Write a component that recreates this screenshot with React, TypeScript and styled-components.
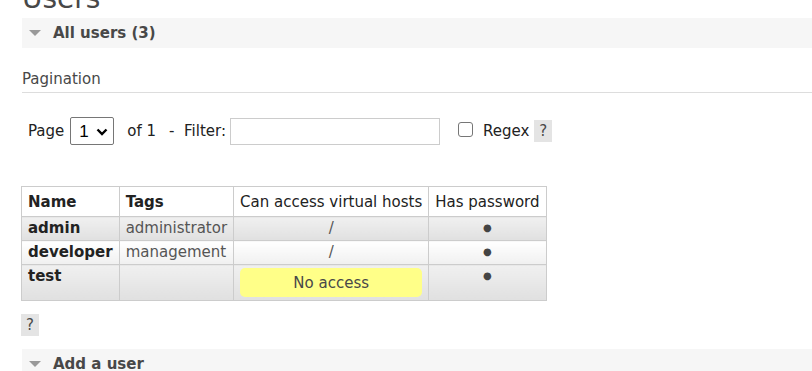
import React from "react";
import styled, {createGlobalStyle} from "styled-components";

const GLOBAL = createGlobalStyle`
    html, body {
        margin: 0;
        padding: 0;
        background: #fff;
        overflow: hidden;
    }
    body {
        font-family: "DejaVu Sans", Verdana, sans-serif;
        font-size: 13px;
        color: #484848;
    }
`

const MAIN = styled.main`
    padding-left: 21px;
    width: 791px;
`
const TITLE = styled.h1`
    margin: -17px 0 0 1px;
    height: 35px;
    font-size: 28px;
    font-weight: 400;
    line-height: 32px;
    color: #484848;
`
const SECTION_HEAD = styled.div`
    display: flex;
    align-items: center;
    gap: 12px;
    height: 30px;
    padding-left: 7px;
    margin-left: 1px;
    background: #f6f6f6;
    font-size: 15px;
    font-weight: 700;
    color: #484848;
`
const TRIANGLE = styled.span`
    width: 0;
    height: 0;
    border-left: 6px solid transparent;
    border-right: 6px solid transparent;
    border-top: 6px solid #999;
`
const SUBHEAD = styled.h3`
    margin: 22px 0 0 1px;
    padding-bottom: 4px;
    font-size: 15px;
    font-weight: 400;
    color: #484848;
    border-bottom: 1px solid #ddd;
`
const FILTER_ROW = styled.div`
    display: flex;
    align-items: center;
    margin: 24px 0 0 7px;
    height: 28px;
`
const LABEL = styled.span<{gap?: number}>`
    margin-left: ${props => props.gap ?? 0}px;
    font-size: 15px;
    color: #222;
    white-space: pre;
`
const SELECT_WRAP = styled.div`
    position: relative;
    margin-left: 6px;
    width: 44px;
    height: 28px;
    box-sizing: border-box;
    border: 1px solid #767676;
    border-radius: 2px;
    display: flex;
    align-items: center;
`
const SELECT = styled.select`
    appearance: none;
    border: none;
    background: transparent;
    width: 100%;
    height: 100%;
    padding: 0 0 0 8px;
    font-family: "Liberation Sans", Arial, sans-serif;
    font-size: 17px;
    color: #000;
    outline: none;
`
const CHEVRON = styled.svg`
    position: absolute;
    right: 5px;
    top: 10px;
    pointer-events: none;
`
const INPUT = styled.input`
    margin-left: 4px;
    width: 210px;
    height: 27px;
    box-sizing: border-box;
    border: 1px solid #ccc;
    padding: 2px 4px;
`
const CHECK = styled.span`
    margin-left: 18px;
    width: 13px;
    height: 13px;
    margin-top: -4px;
    border: 1px solid #767676;
    border-radius: 3px;
`
const HELP = styled.span`
    display: inline-flex;
    align-items: center;
    justify-content: center;
    width: 18px;
    height: 22px;
    margin-left: 5px;
    background: #e4e4e4;
    font-size: 15px;
    color: #484848;
`
const TABLE = styled.table`
    margin-top: 41px;
    border-collapse: collapse;
    font-size: 15px;
`
const TH = styled.th`
    height: 29px;
    padding: 0 6px;
    border: 1px solid #ccc;
    background: #fff;
    font-weight: 400;
    text-align: left;
    color: #222;
    &:first-child, &:nth-child(2) {
        font-weight: 700;
    }
`
const TR = styled.tr<{alt?: boolean}>`
    & > td {
        background: ${props => props.alt
            ? "linear-gradient(to bottom, #fff 0%, #f0f0f0 100%)"
            : "linear-gradient(to bottom, #f0f0f0 0%, #e0e0e0 100%)"};
    }
`
const TD = styled.td<{center?: boolean}>`
    height: 23px;
    padding: 0 6px;
    border: 1px solid #ccc;
    vertical-align: top;
    line-height: 23px;
    text-align: ${props => props.center ? "center" : "left"};
    color: #555;
`
const NAME = styled(TD)`
    font-weight: 700;
    color: #222;
`
const DOT = styled.span`
    font-size: 10px;
    line-height: 0;
    color: #444;
    vertical-align: 2px;
`
const NO_ACCESS = styled.div`
    margin: 3px 0;
    height: 29px;
    line-height: 31px;
    border-radius: 5px;
    background: #ffff88;
    text-align: center;
    color: #484848;
`
const BOTTOM_HELP = styled(HELP)`
    margin: 13px 0 0 0;
`
const LAST_HEAD = styled(SECTION_HEAD)`
    margin-top: 13px;
`

const Chevron = () => (
    <CHEVRON width="12" height="8" viewBox="0 0 12 8">
        <path d="M1.5 1.5 L6 6 L10.5 1.5" fill="none" stroke="#000" strokeWidth="2.4"/>
    </CHEVRON>
)

const users = [
    {name: "admin", tags: "administrator", vhosts: "/"},
    {name: "developer", tags: "management", vhosts: "/"},
    {name: "test", tags: "", vhosts: ""},
]

const App = () => {
    return (
        <>
            <GLOBAL/>
            <MAIN>
                <TITLE>Users</TITLE>
                <SECTION_HEAD><TRIANGLE/>All users (3)</SECTION_HEAD>
                <SUBHEAD>Pagination</SUBHEAD>
                <FILTER_ROW>
                    <LABEL>Page</LABEL>
                    <SELECT_WRAP>
                        <SELECT defaultValue="1"><option value="1">1</option></SELECT>
                        <Chevron/>
                    </SELECT_WRAP>
                    <LABEL gap={13}>of 1</LABEL>
                    <LABEL gap={13}>-  Filter:</LABEL>
                    <INPUT type="text"/>
                    <CHECK/>
                    <LABEL gap={10}>Regex</LABEL>
                    <HELP>?</HELP>
                </FILTER_ROW>
                <TABLE>
                    <thead>
                        <tr>
                            <TH>Name</TH>
                            <TH>Tags</TH>
                            <TH>Can access virtual hosts</TH>
                            <TH>Has password</TH>
                        </tr>
                    </thead>
                    <tbody>
                        {users.map((u, i) => (
                            <TR key={u.name} alt={i % 2 === 1}>
                                <NAME>{u.name}</NAME>
                                <TD>{u.tags}</TD>
                                <TD center>{u.vhosts ? u.vhosts : <NO_ACCESS>No access</NO_ACCESS>}</TD>
                                <TD center><DOT>●</DOT></TD>
                            </TR>
                        ))}
                    </tbody>
                </TABLE>
                <BOTTOM_HELP>?</BOTTOM_HELP>
                <LAST_HEAD><TRIANGLE/>Add a user</LAST_HEAD>
            </MAIN>
        </>
    )
}

export default App;
